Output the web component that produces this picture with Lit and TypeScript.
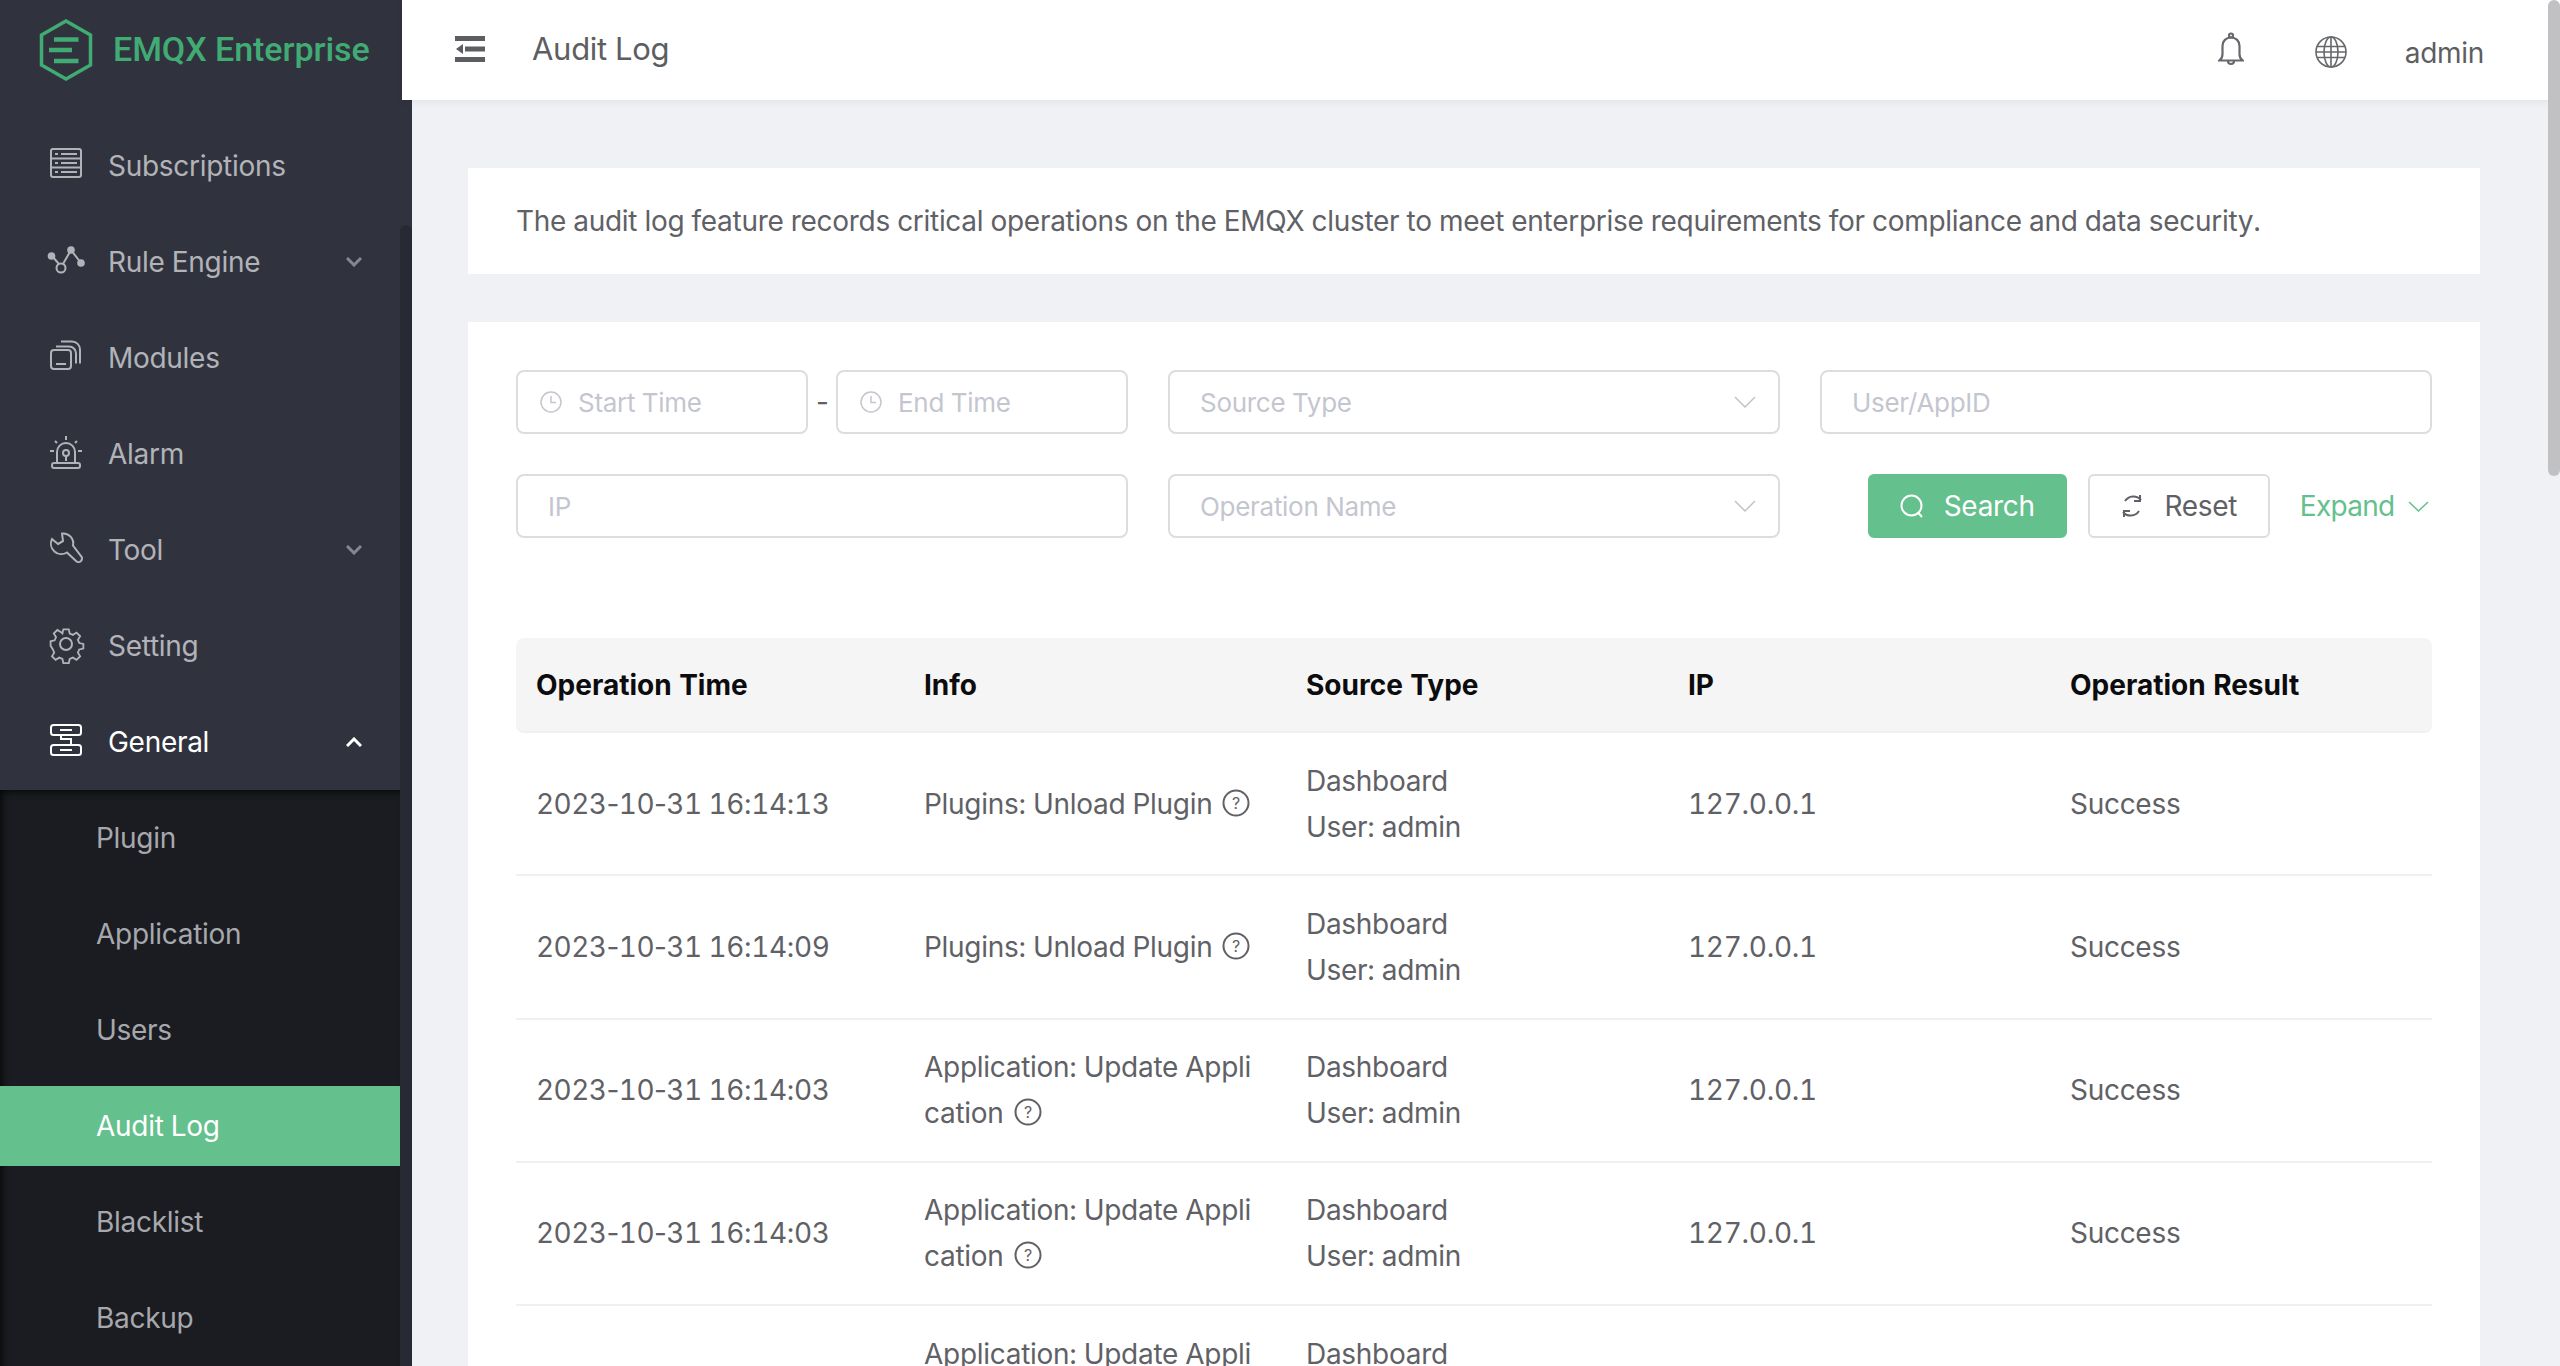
import { LitElement, css, html, svg } from "lit";
import { customElement } from "lit/decorators.js";

const menuIcons: Record<string, unknown> = {
  subscriptions: svg`<rect x="1" y="1" width="30" height="28" rx="2"/><path d="M5 6h3M11 6h16M1 10.500h30M5 15h3M11 15h16M1 19.500h30M5 24h3M11 24h16"/>`,
  rule: svg`<circle cx="11" cy="24" r="4.500"/><path d="M2 12l7 8M13 20l8-14M21 6l10 13"/><circle cx="1.500" cy="12" r="2.800" fill="currentColor"/><circle cx="21" cy="6" r="2.800" fill="currentColor"/><circle cx="31" cy="19" r="2.800" fill="currentColor"/>`,
  modules: svg`<rect x="1" y="10" width="20" height="19" rx="3"/><path d="M6 24h10M6 6.500h13a7 7 0 0 1 7 7v10M11 1.500h11a8 8 0 0 1 8 8v14"/>`,
  alarm: svg`<path d="M7 27V16a9 9 0 0 1 18 0v11"/><rect x="2" y="27" width="28" height="5" rx="2"/><circle cx="16" cy="17" r="3"/><path d="M16 20v5M16 0v4M0 15h4M28 15h4M5 5l2 2M27 5l-2 2"/>`,
  tool: svg`<path d="M12 1.500a10 10 0 0 1 11 12l8 10.500a3.500 3.500 0 0 1-5 5l-9-8.500A10.500 10.500 0 0 1 2 7l6 5 5-3-1-7.500z"/><path d="M8 12l5-3"/>`,
  setting: svg`<circle cx="16" cy="16" r="6"/><path d="M13 1h6l1 4.500 3.500 1.500 4-2.500 4 4-2.500 4 1.500 3.500 4.500 1v5l-4.500 1-1.500 3.500 2.500 4-4 4-4-2.500-3.500 1.500-1 4.500h-6l-1-4.500-3.500-1.500-4 2.500-4-4 2.500-4-1.500-3.500L-1 19v-5l4.500-1L5 9.500 2.500 5.500l4-4 4 2.500L12 5.500z" transform="translate(1.500 .5) scale(.91)"/>`,
  general: svg`<rect x="1" y="1" width="30" height="10" rx="2.500"/><rect x="1" y="21" width="30" height="10" rx="2.500"/><path d="M10 6h12M10 26h12M11 11v4h10v6"/>`,
};

const mainMenu = [
  { icon: "subscriptions", label: "Subscriptions" },
  { icon: "rule", label: "Rule Engine", arrow: true },
  { icon: "modules", label: "Modules" },
  { icon: "alarm", label: "Alarm" },
  { icon: "tool", label: "Tool", arrow: true },
  { icon: "setting", label: "Setting" },
];

const subMenu = ["Plugin", "Application", "Users", "Audit Log", "Blacklist", "Backup"];

const unload = "Plugins: Unload Plugin";
const update = "Application: Update Application";
const rows = [
  { time: "2023-10-31 16:14:13", info: unload },
  { time: "2023-10-31 16:14:09", info: unload },
  { time: "2023-10-31 16:14:03", info: update },
  { time: "2023-10-31 16:14:03", info: update },
  { time: "2023-10-31 16:14:03", info: update },
];

@customElement("app-root")
class AppRoot extends LitElement {
  static styles = css`
    :host {
      display: block;
      position: relative;
      width: 2560px;
      height: 1366px;
      overflow: hidden;
      font-family: Inter, "Liberation Sans", sans-serif;
      font-size: 28px;
      letter-spacing: -0.29px;
      font-variant-numeric: tabular-nums;
      color: #5f6166;
      background: #f0f1f5;
    }

    .layout {
      display: grid;
      grid-template-columns: 412px 1fr;
      height: 100%;
    }

    /* sidebar */
    .sidebar {
      background: #30333e;
      overflow: hidden;
      height: 1366px;
    }
    .logo {
      display: flex;
      align-items: center;
      gap: 19px;
      height: 100px;
      padding-left: 38px;
      color: #41ab74;
      font-family: Roboto, sans-serif;
      font-weight: 500;
      font-size: 34px;
      letter-spacing: -0.05px;
      white-space: nowrap;
    }
    .logo svg { width: 56px; height: 62px; flex: none; }
    .logo span { margin-top: -2px; }
    .menu {
      padding-top: 18px;
      width: 400px;
    }
    .item {
      display: flex;
      align-items: center;
      height: 96px;
      padding-left: 50px;
      color: #b2b3b9;
    }
    .item .icon {
      width: 32px;
      height: 32px;
      margin-right: 26px;
      margin-top: -4px;
      overflow: visible;
      fill: none;
      stroke: currentColor;
      stroke-width: 2;
    }
    .item .arrow {
      margin-left: auto;
      margin-right: 38px;
      width: 16px;
      height: 10px;
      fill: none;
      stroke: #86888f;
      stroke-width: 3;
    }
    .item.open { color: #fff; }
    .item.open .arrow { stroke: #fff; transform: rotate(180deg); }
    .sub {
      background: #1a1c21;
      box-shadow: inset 0 8px 10px -8px #000, inset 10px 0 10px -10px #000;
      padding: 8px 0;
    }
    .sub div {
      display: flex;
      align-items: center;
      height: 80px;
      margin-bottom: 16px;
      padding-left: 96px;
      color: #a7a8ad;
    }
    .sub div.active {
      background: #64c08d;
      color: #fff;
    }
    .side-thumb {
      position: absolute;
      left: 400px;
      top: 225px;
      width: 12px;
      height: 1141px;
      border-radius: 6px 6px 0 0;
      background: #282a33;
    }

    /* main */
    .main {
      min-width: 0;
    }
    .header {
      position: relative;
      display: flex;
      align-items: center;
      height: 100px;
      margin-left: -10px;
      background: #fff;
      box-shadow: 0 2px 8px rgba(0, 0, 0, 0.06);
      color: #5c5e62;
    }
    .toggle { width: 30px; height: 26px; margin-left: 53px; margin-top: -2px; }
    .title { margin-left: 47px; margin-top: -4px; font-size: 31px; }
    .actions {
      margin-left: auto;
      display: flex;
      align-items: center;
      padding-right: 76px;
    }
    .actions svg { fill: none; stroke: #66686c; }
    .bell { width: 26px; height: 34px; margin-right: 71px; margin-top: -3px; }
    .globe { width: 32px; height: 32px; margin-right: 58px; margin-top: 4px; }
    .user { margin-top: 5px; }

    .content {
      padding: 68px 80px 0 56px;
    }
    .card {
      background: #fff;
    }
    .intro {
      height: 106px;
      display: flex;
      align-items: center;
      padding-left: 48px;
      margin-bottom: 48px;
    }
    .list {
      padding: 48px;
    }

    .filters {
      display: grid;
      grid-template-columns: repeat(3, 612px);
      gap: 40px;
      margin-bottom: 100px;
    }
    .range {
      display: grid;
      grid-template-columns: 292px 12px 292px;
      justify-content: space-between;
      align-items: center;
    }
    .dash { text-align: center; font-variant-numeric: normal; }
    .input {
      display: flex;
      align-items: center;
      height: 64px;
      box-sizing: border-box;
      border: 2px solid #dcdde0;
      border-radius: 8px;
      padding: 0 30px;
      color: #c4c6cf;
      background: #fff;
      font-size: 26px;
    }
    .range .input { padding: 0 22px; }
    .clock {
      width: 22px;
      height: 22px;
      margin-right: 16px;
      fill: none;
      stroke: #c4c6cf;
      stroke-width: 1.500;
    }
    .chevron {
      margin-left: auto;
      width: 22px;
      height: 12px;
      margin-right: -8px;
      fill: none;
      stroke: #c0c4cc;
      stroke-width: 1.500;
    }
    .buttons {
      display: flex;
      align-items: center;
      justify-content: flex-end;
    }
    .btn {
      display: flex;
      align-items: center;
      justify-content: center;
      gap: 20px;
      height: 64px;
      box-sizing: border-box;
      border-radius: 6px;
      border: 2px solid #dcdde0;
      color: #5f6166;
      background: #fff;
    }
    .btn svg { width: 24px; height: 24px; fill: none; stroke: currentColor; stroke-width: 2; }
    .btn.search { width: 199px; background: #64c08d; border-color: #64c08d; color: #fff; margin-right: 21px; }
    .btn.reset { width: 182px; }
    .expand {
      display: flex;
      align-items: center;
      gap: 13.500px;
      margin-left: 30px;
      margin-right: 3px;
      color: #64c08d;
      letter-spacing: -0.7px;
    }
    .expand svg { width: 21px; height: 11px; fill: none; stroke: currentColor; stroke-width: 1.500; }

    .row {
      display: grid;
      grid-template-columns: 388px 382px 382px 382px 382px;
      align-items: center;
      box-sizing: border-box;
      height: 143.250px;
      border-bottom: 2px solid #f0eff5;
      line-height: 46px;
    }
    .row > div {
      padding: 0 24px 0 20px;
      word-break: break-all;
    }
    .row.head {
      height: 95px;
      background: #f5f5f5;
      border-radius: 8px;
      color: #0c0c0e;
      font-weight: 700;
      letter-spacing: 0;
    }
    .row > .time { letter-spacing: -0.55px; }
    .sep { font-variant-numeric: normal; }
    .help {
      display: inline-block;
      width: 28px;
      height: 28px;
      margin-left: 10px;
      vertical-align: -3px;
      fill: none;
      stroke: currentColor;
      stroke-width: 2;
    }
    .help text {
      fill: currentColor;
      stroke: none;
      font-size: 16px;
      font-family: Inter, sans-serif;
    }

    .page-thumb {
      position: absolute;
      right: 0;
      top: 0;
      width: 12px;
      height: 476px;
      border-radius: 6px;
      background: #c1c1c3;
    }
  `;

  // the digits are tabular in the reference, the - and : between them are not
  renderTime(time: string) {
    return time.split(/([-:])/).map(part =>
      part === "-" || part === ":" ? html`<span class="sep">${part}</span>` : part
    );
  }

  renderSidebar() {
    return html`
      <aside class="sidebar">
        <div class="logo">
          <svg viewBox="0 0 56 62" fill="none" stroke="currentColor">
            <path d="M28 2l24.500 14v30L28 60 3.500 46V16z" stroke-width="3.500"/>
            <path d="M16 20.500h24.500M11 31h23M16 42h24.500" stroke-width="4.500"/>
          </svg>
          <span>EMQX Enterprise</span>
        </div>
        <nav class="menu">
          ${mainMenu.map(m => html`
            <div class="item">
              <svg class="icon" viewBox="0 0 32 32">${menuIcons[m.icon]}</svg>
              ${m.label}
              ${m.arrow ? html`<svg class="arrow" viewBox="0 0 16 10"><path d="M1 1l7 7 7-7"/></svg>` : ""}
            </div>
          `)}
          <div class="item open">
            <svg class="icon" viewBox="0 0 32 32">${menuIcons.general}</svg>
            General
            <svg class="arrow" viewBox="0 0 16 10"><path d="M1 1l7 7 7-7"/></svg>
          </div>
          <div class="sub">
            ${subMenu.map(s => html`<div class=${s === "Audit Log" ? "active" : ""}>${s}</div>`)}
          </div>
        </nav>
      </aside>
      <div class="side-thumb"></div>
    `;
  }

  renderHeader() {
    return html`
      <header class="header">
        <svg class="toggle" viewBox="0 0 30 26" fill="#5c5e62">
          <rect width="30" height="5"/><rect y="10.500" x="10" width="20" height="5"/><rect y="21" width="30" height="5"/>
          <path d="M1 13l7-5v10z"/>
        </svg>
        <span class="title">Audit Log</span>
        <div class="actions">
          <svg class="bell" viewBox="0 0 26 34" stroke-width="2.200">
            <path d="M1.500 28.500c2-1.500 3-3 3-6.500v-8c0-5 3.500-8.500 8.500-8.500s8.500 3.500 8.500 8.500v8c0 3.500 1 5 3 6.500z"/>
            <circle cx="13" cy="3.500" r="2"/><path d="M10 29a3 3 0 0 0 6 0"/>
          </svg>
          <svg class="globe" viewBox="0 0 32 32" stroke-width="1.600">
            <circle cx="16" cy="16" r="15"/><ellipse cx="16" cy="16" rx="7" ry="15"/>
            <path d="M16 1v30M2 10.500h28M1 16h30M2 21.500h28"/>
          </svg>
          <span class="user">admin</span>
        </div>
      </header>
    `;
  }

  renderFilters() {
    const clock = html`<svg class="clock" viewBox="0 0 22 22"><circle cx="11" cy="11" r="10"/><path d="M11 5v6.500h5"/></svg>`;
    const chevron = html`<svg class="chevron" viewBox="0 0 22 12"><path d="M1 1l10 10L21 1"/></svg>`;
    return html`
      <div class="filters">
        <div class="range">
          <div class="input">${clock}Start Time</div>
          <span class="dash">-</span>
          <div class="input">${clock}End Time</div>
        </div>
        <div class="input">Source Type${chevron}</div>
        <div class="input">User/AppID</div>
        <div class="input">IP</div>
        <div class="input">Operation Name${chevron}</div>
        <div class="buttons">
          <div class="btn search">
            <svg viewBox="0 0 24 24"><circle cx="11.500" cy="11.500" r="10"/><path d="M18.500 19l3.500 4"/></svg>
            Search
          </div>
          <div class="btn reset">
            <svg viewBox="0 0 24 24"><path d="M5 7a10 10 0 0 1 16-1M19 17A10 10 0 0 1 3 18M20 1v6h-6M4 23v-6h6"/></svg>
            Reset
          </div>
          <div class="expand">
            Expand
            <svg viewBox="0 0 21 11"><path d="M1 1l9.500 9L20 1"/></svg>
          </div>
        </div>
      </div>
    `;
  }

  renderTable() {
    return html`
      <div class="row head">
        <div>Operation Time</div><div>Info</div><div>Source Type</div><div>IP</div><div>Operation Result</div>
      </div>
      ${rows.map(r => html`
        <div class="row">
          <div class="time">${this.renderTime(r.time)}</div>
          <div>${r.info}<svg class="help" viewBox="0 0 28 28"><circle cx="14" cy="14" r="12.500"/><text x="14" y="20" text-anchor="middle">?</text></svg></div>
          <div>Dashboard<br>User: admin</div>
          <div>127.0.0.1</div>
          <div>Success</div>
        </div>
      `)}
    `;
  }

  render() {
    return html`
      <div class="layout">
        ${this.renderSidebar()}
        <main class="main">
          ${this.renderHeader()}
          <div class="content">
            <div class="card intro">
              The audit log feature records critical operations on the EMQX cluster to meet enterprise requirements for compliance and data security.
            </div>
            <div class="card list">
              ${this.renderFilters()}
              ${this.renderTable()}
            </div>
          </div>
        </main>
      </div>
      <div class="page-thumb"></div>
    `;
  }
}

export default AppRoot;
